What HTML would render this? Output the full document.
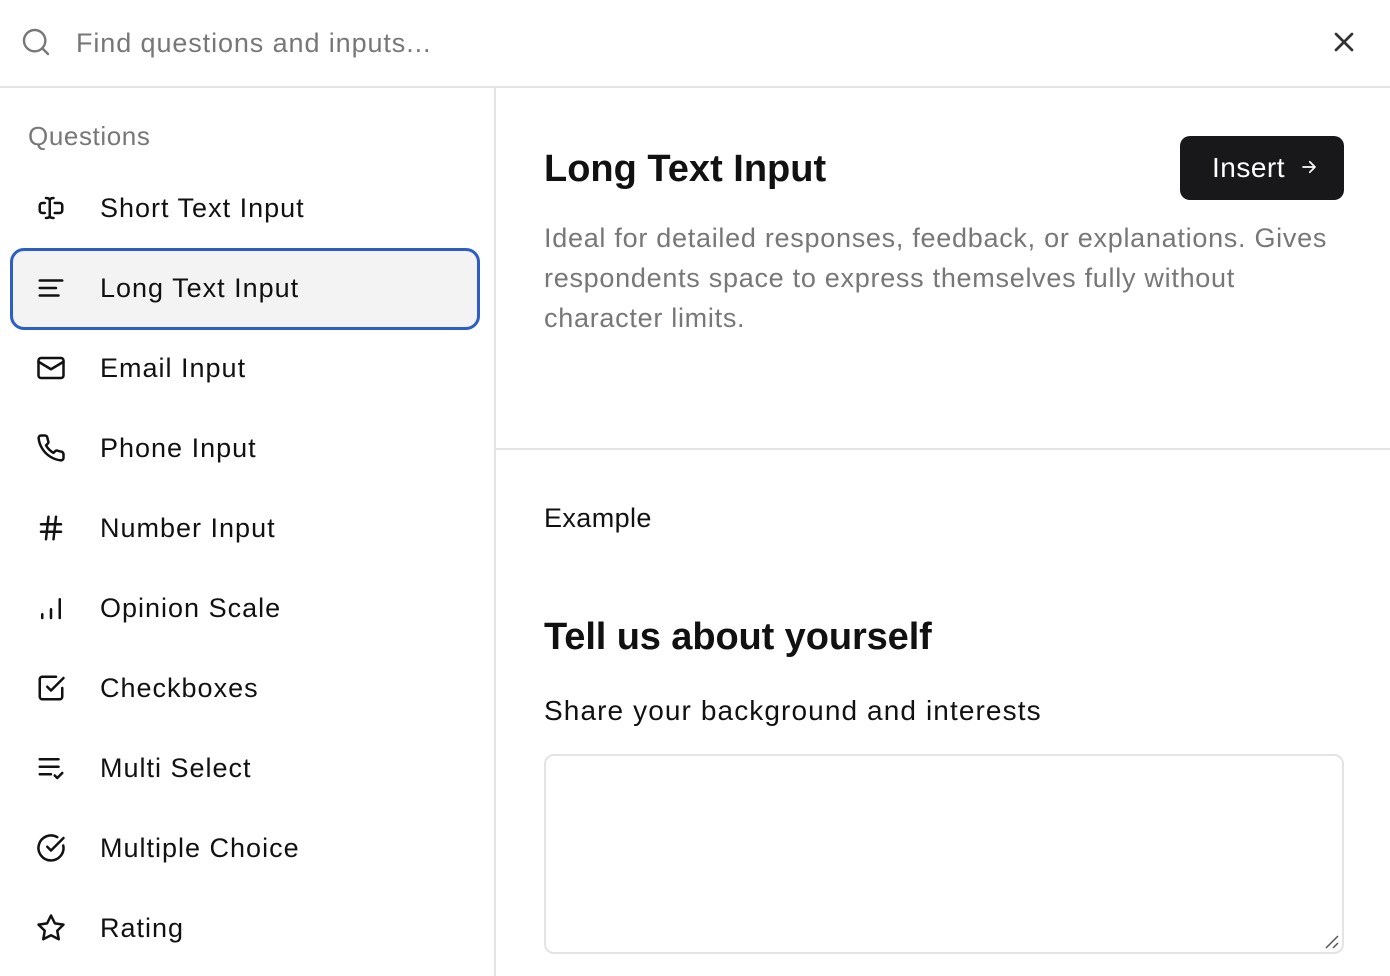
<!DOCTYPE html>
<html><head><meta charset="utf-8"><style>
*{box-sizing:border-box;margin:0;padding:0}
body{width:1390px;height:976px;overflow:hidden;background:#fff;font-family:"Liberation Sans",sans-serif;color:#111;position:relative}
.top{position:absolute;left:0;top:0;width:1390px;height:88px;border-bottom:2px solid #e4e4e4}
.top .ph{position:absolute;left:76px;top:28px;font-size:27px;color:#777;letter-spacing:0.9px}
.side{position:absolute;left:0;top:88px;width:496px;height:888px;border-right:2px solid #e4e4e4}
.sh{position:absolute;left:28px;top:33px;font-size:26px;color:#777;letter-spacing:0.6px}
.item{position:absolute;left:10px;width:470px;height:82px;border-radius:14px}
.item.sel{background:#f3f3f3;border:3px solid #2b5fc7}
.item svg{position:absolute;left:26px;top:25px}
.item span{position:absolute;left:90px;top:25px;font-size:27px;color:#111;letter-spacing:1px}
.item.sel svg{left:23px;top:22px}.item.sel span{left:87px;top:22px}
.main{position:absolute;left:496px;top:88px;width:894px}
h1{position:absolute;left:48px;top:60px;font-size:38px;font-weight:bold;letter-spacing:0px}
.btn{position:absolute;left:684px;top:48px;width:164px;height:64px;background:#18181a;border-radius:10px;color:#fff;font-size:28px;padding:16px 0 0 32px;letter-spacing:0.5px}
.desc{position:absolute;left:48px;top:130px;width:800px;font-size:27px;line-height:40px;color:#777;letter-spacing:0.72px}
.div{position:absolute;left:0;top:360px;width:894px;border-top:2px solid #e4e4e4}
.ex{position:absolute;left:48px;top:415px;font-size:27px;letter-spacing:0.4px}
h2{position:absolute;left:48px;top:528px;font-size:38px;font-weight:bold;letter-spacing:-0.1px}
.sub{position:absolute;left:48px;top:607px;font-size:28px;letter-spacing:1.1px}
.ta{position:absolute;left:48px;top:666px;width:800px;height:200px;border:2px solid #e4e4e4;border-radius:10px}
</style></head><body>
<div class="top">
<svg style="position:absolute;left:20px;top:26px" width="32" height="32" viewBox="0 0 24 24" fill="none" stroke="#777" stroke-width="1.8" stroke-linecap="round"><circle cx="11" cy="11" r="8"/><path d="m21 21-4.3-4.3"/></svg>
<div class="ph">Find questions and inputs...</div>
<svg style="position:absolute;left:1328px;top:26px" width="32" height="32" viewBox="0 0 24 24" fill="none" stroke="#333" stroke-width="2" stroke-linecap="round"><path d="M18 6 6 18M6 6l12 12"/></svg>
</div>
<div class="side">
<div class="sh">Questions</div>
<div class="item" style="top:80px"><svg width="30" height="30" viewBox="0 0 24 24" fill="none" stroke="#111" stroke-width="2" stroke-linecap="round" stroke-linejoin="round"><path d="M15 8h4a2 2 0 0 1 2 2v4a2 2 0 0 1-2 2h-4"/><path d="M7 8H5a2 2 0 0 0-2 2v4a2 2 0 0 0 2 2h2"/><path d="M8 4c1.5 0 3 .5 3 2v12c0 1.5-1.5 2-3 2M14 4c-1.5 0-3 .5-3 2v12c0 1.5 1.5 2 3 2"/></svg><span>Short Text Input</span></div>
<div class="item sel" style="top:160px"><svg width="30" height="30" viewBox="0 0 24 24" fill="none" stroke="#111" stroke-width="2" stroke-linecap="round"><path d="M3 6h18M3 12h13M3 18h15"/></svg><span>Long Text Input</span></div>
<div class="item" style="top:240px"><svg width="30" height="30" viewBox="0 0 24 24" fill="none" stroke="#111" stroke-width="2" stroke-linecap="round" stroke-linejoin="round"><rect x="2" y="4" width="20" height="16" rx="2"/><path d="m22 7-10 6L2 7"/></svg><span>Email Input</span></div>
<div class="item" style="top:320px"><svg width="30" height="30" viewBox="0 0 24 24" fill="none" stroke="#111" stroke-width="2" stroke-linecap="round" stroke-linejoin="round"><path d="M22 16.9v3a2 2 0 0 1-2.2 2 19.8 19.8 0 0 1-8.6-3.1 19.5 19.5 0 0 1-6-6A19.8 19.8 0 0 1 2.1 4.2 2 2 0 0 1 4.1 2h3a2 2 0 0 1 2 1.7c.1 1 .4 1.9.7 2.8a2 2 0 0 1-.5 2.1L8 9.9a16 16 0 0 0 6 6l1.3-1.3a2 2 0 0 1 2.1-.4c.9.3 1.8.6 2.8.7a2 2 0 0 1 1.7 2z"/></svg><span>Phone Input</span></div>
<div class="item" style="top:400px"><svg width="30" height="30" viewBox="0 0 24 24" fill="none" stroke="#111" stroke-width="2" stroke-linecap="round"><path d="M4 9h16M4 15h16M10 3 8 21M16 3l-2 18"/></svg><span>Number Input</span></div>
<div class="item" style="top:480px"><svg width="30" height="30" viewBox="0 0 24 24" fill="none" stroke="#111" stroke-width="2" stroke-linecap="round"><path d="M5 20v-3M12 20v-7M19 20V5"/></svg><span>Opinion Scale</span></div>
<div class="item" style="top:560px"><svg width="30" height="30" viewBox="0 0 24 24" fill="none" stroke="#111" stroke-width="2" stroke-linecap="round" stroke-linejoin="round"><path d="m9 11 3 3L22 4"/><path d="M21 12v7a2 2 0 0 1-2 2H5a2 2 0 0 1-2-2V5a2 2 0 0 1 2-2h11"/></svg><span>Checkboxes</span></div>
<div class="item" style="top:640px"><svg width="30" height="30" viewBox="0 0 24 24" fill="none" stroke="#111" stroke-width="2" stroke-linecap="round" stroke-linejoin="round"><path d="M3 5h15M3 11h15M3 17h9M15 18l2 2 4-4"/></svg><span>Multi Select</span></div>
<div class="item" style="top:720px"><svg width="30" height="30" viewBox="0 0 24 24" fill="none" stroke="#111" stroke-width="2" stroke-linecap="round" stroke-linejoin="round"><path d="M21.8 10A10 10 0 1 1 17 3.3"/><path d="m9 11 3 3L22 4"/></svg><span>Multiple Choice</span></div>
<div class="item" style="top:800px"><svg width="30" height="30" viewBox="0 0 24 24" fill="none" stroke="#111" stroke-width="2" stroke-linejoin="round"><path d="m12 2 3.1 6.3 6.9 1-5 4.9 1.2 6.8L12 17.8 5.8 21l1.2-6.8-5-4.9 6.9-1z"/></svg><span>Rating</span></div>
</div>
<div class="main">
<h1>Long Text Input</h1>
<div class="btn">Insert<svg style="position:absolute;left:120px;top:22px" width="18" height="18" viewBox="0 0 24 24" fill="none" stroke="#fff" stroke-width="2.2" stroke-linecap="round" stroke-linejoin="round"><path d="M4 12h16M13 5l7 7-7 7"/></svg></div>
<div class="desc">Ideal for detailed responses, feedback, or explanations. Gives respondents space to express themselves fully without character limits.</div>
<div class="div"></div>
<div class="ex">Example</div>
<h2>Tell us about yourself</h2>
<div class="sub">Share your background and interests</div>
<div class="ta"><svg style="position:absolute;right:2px;bottom:2px" width="16" height="16" viewBox="0 0 16 16" stroke="#555" stroke-width="1.5"><path d="M2 14 14 2M9 14l5-5"/></svg></div>
</div>
</body></html>
